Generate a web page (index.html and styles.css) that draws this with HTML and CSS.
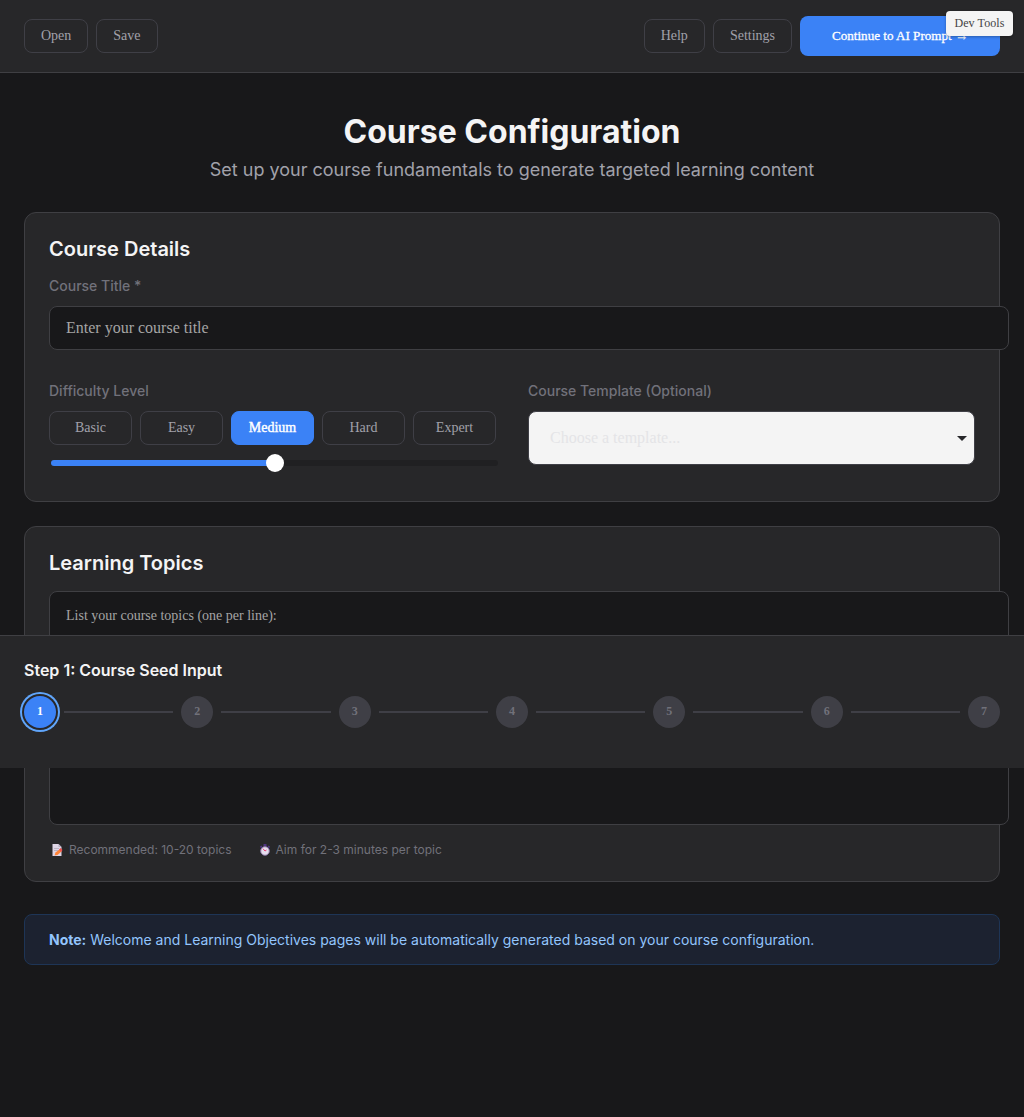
FILE: index.html
```html
<!DOCTYPE html>
<html lang="en">
<head>
<meta charset="utf-8">
<title>Course Configuration</title>
<link rel="stylesheet" href="styles.css">
</head>
<body>
<header class="topbar">
  <div class="group"><button class="btn">Open</button><button class="btn">Save</button></div>
  <div class="group"><button class="btn">Help</button><button class="btn">Settings</button><button class="btn primary">Continue to AI Prompt →</button></div>
</header>
<button class="dev-tools">Dev Tools</button>
<main class="content">
  <h1 class="title">Course Configuration</h1>
  <p class="subtitle">Set up your course fundamentals to generate targeted learning content</p>

  <section class="card details">
    <h2 class="card-title">Course Details</h2>
    <label class="label title-label">Course Title *</label>
    <input class="field" type="text" placeholder="Enter your course title">
    <div class="columns">
      <div class="column">
        <label class="label">Difficulty Level</label>
        <div class="levels">
          <button class="btn">Basic</button><button class="btn">Easy</button><button class="btn selected">Medium</button><button class="btn">Hard</button><button class="btn">Expert</button>
        </div>
        <div class="slider"><span class="fill"></span><span class="thumb"></span><span class="rest"></span></div>
      </div>
      <div class="column">
        <label class="label">Course Template (Optional)</label>
        <div class="select"><span class="choice">Choose a template...</span><svg width="10" height="5" viewBox="0 0 10 5"><path d="M0 0h10L5 5z" fill="#27272a"/></svg></div>
      </div>
    </div>
  </section>

  <section class="card topics">
    <h2 class="card-title">Learning Topics</h2>
    <textarea class="field area" placeholder="List your course topics (one per line):"></textarea>
    <div class="hints">
      <span class="hint"><svg class="memo" width="11" height="12" viewBox="0 0 11 12"><path d="M.5 0h6l3 3v9h-9z" fill="#ded5e6"/><path d="M6.500 0v3h3z" fill="#b7aec2"/><path d="M2 4.500h5M2 6.500h5" stroke="#b3a9ba" stroke-width=".8"/><path d="M2.500 11.500l1-3 4-3 2 2-4 3.500z" fill="#ff8438"/><path d="M7 5.500l1.500-1.500 2 2-1.500 2z" fill="#f0504d"/></svg>Recommended: 10-20 topics</span>
      <span class="hint"><svg class="watch" width="12" height="12" viewBox="0 0 12 12"><path d="M4.500 0h3v2.500h-3zM1 2.500l1.500-1 1 1.500L2 4.500zM9.500 1.500l1.500 1-1 2L8.500 3z" fill="#4e347f"/><circle cx="6" cy="7" r="4.300" fill="#e6deee" stroke="#8b78a7"/><path d="M6 7L4 4.700M6 7l1.500-1" stroke="#e83f74"/></svg>Aim for 2-3 minutes per topic</span>
    </div>
  </section>

  <aside class="note"><strong>Note:</strong> Welcome and Learning Objectives pages will be automatically generated based on your course configuration.</aside>
</main>

<footer class="progress">
  <h3 class="step-title">Step 1: Course Seed Input</h3>
  <div class="steps">
    <span class="step current">1</span><i class="line"></i><span class="step">2</span><i class="line"></i><span class="step">3</span><i class="line"></i><span class="step">4</span><i class="line"></i><span class="step">5</span><i class="line"></i><span class="step">6</span><i class="line"></i><span class="step">7</span>
  </div>
</footer>
</body>
</html>
```
FILE: styles.css
```css
* { box-sizing: border-box; }
body {
  margin: 0;
  min-height: 1117px;
  position: relative;
  overflow-x: hidden;
  background: #18181a;
  color: #f4f4f5;
  font-family: Inter, sans-serif;
}
h1, h2, h3, p { margin: 0; }
button, input, textarea, .select, .step { font-family: "Liberation Serif", serif; }

.topbar {
  height: 73px;
  padding: 0 24px;
  display: flex;
  align-items: center;
  justify-content: space-between;
  background: #272729;
  border-bottom: 1px solid #3f3f43;
}
.group { display: flex; align-items: center; gap: 8px; }
.btn {
  height: 34px;
  padding: 0 16px 1px;
  border: 1px solid #3f3f46;
  border-radius: 8px;
  background: transparent;
  color: #a1a1aa;
  font-size: 14px;
  white-space: nowrap;
}
.btn.primary {
  width: 200px;
  height: 40px;
  padding: 0 0 1px 32px;
  border: 0;
  background: #3b82f6;
  color: #fff;
  font-size: 13.1px;
  text-align: left;
  -webkit-text-stroke: 0.3px #fff;
}
.dev-tools {
  position: absolute;
  z-index: 20;
  top: 11px;
  left: 946px;
  width: 67px;
  height: 25px;
  padding: 0;
  border: 0;
  border-radius: 4px;
  background: #f4f4f4;
  color: #444;
  font-size: 12px;
  letter-spacing: 0.1px;
  box-shadow: 0 1px 3px rgba(0, 0, 0, 0.3);
}

.content { padding: 39px 24px 0; }
.title { line-height: 40px; font-size: 32px; font-weight: 700; text-align: center; }
.subtitle { margin-top: 4px; line-height: 28px; font-size: 18px; color: #a1a1aa; text-align: center; }
.card {
  padding: 24px;
  background: #272729;
  border: 1px solid #3f3f43;
  border-radius: 12px;
}
.details { height: 290px; margin-top: 28px; }
.topics { height: 356px; margin-top: 24px; }
.card-title { line-height: 24px; font-size: 20px; font-weight: 600; }
.label { display: block; line-height: 20px; font-size: 14px; font-weight: 500; color: #71717a; }
.title-label { margin-top: 15px; }
.field {
  display: block;
  width: 960px;
  height: 44px;
  margin-top: 10px;
  padding: 0 16px;
  background: #18181a;
  border: 1px solid #3f3f43;
  border-radius: 8px;
  font-size: 16px;
}
.field::placeholder { color: #a5a5a5; opacity: 1; }
.columns { display: grid; grid-template-columns: 1fr 1fr; gap: 32px; margin-top: 31px; }
.levels { display: grid; grid-template-columns: repeat(5, 1fr); gap: 8px; margin-top: 10px; }
.levels .btn { padding: 0 0 1px; }
.btn.selected { background: #3b82f6; border-color: #3b82f6; color: #fff; -webkit-text-stroke: 0.4px #fff; }
.slider { display: flex; align-items: center; height: 18px; margin: 9px -2px 0 2px; }
.fill, .rest { flex: 1; height: 6px; }
.fill { background: #3b82f6; border-radius: 3px 0 0 3px; margin-right: -9px; }
.rest { background: #202022; border-radius: 0 3px 3px 0; margin-left: -9px; }
.thumb { z-index: 1; width: 18px; height: 18px; border-radius: 50%; background: #fff; }
.select {
  display: flex;
  align-items: center;
  justify-content: space-between;
  height: 54px;
  margin-top: 10px;
  padding: 0 7px 0 21px;
  background: #f4f4f4;
  border: 1px solid #3f3f46;
  border-radius: 8px;
  font-size: 16px;
  color: #e4e4e7;
}
.area { height: 234px; margin-top: 16px; padding: 16px; font-size: 14px; resize: none; }
.hints { display: flex; gap: 27px; margin: 15px 0 0 3px; font-size: 12px; line-height: 20px; color: #71717a; }
.hint { display: flex; align-items: center; }
.memo { margin-right: 6px; }
.watch { margin-right: 5px; }
.note {
  height: 51px;
  margin-top: 32px;
  padding: 0 24px;
  line-height: 50px;
  font-size: 14px;
  color: #93c5fd;
  background: #1c2230;
  border: 1px solid #1e3556;
  border-radius: 8px;
}

/* Progress bar pinned over the page content */
.progress {
  position: absolute;
  z-index: 10;
  top: 635px;
  left: 0;
  width: 100%;
  height: 133px;
  padding: 24px 24px 0;
  background: #272729;
  border-top: 1px solid #3f3f43;
}
.step-title { line-height: 20px; font-size: 16px; font-weight: 600; }
.steps { display: flex; align-items: center; gap: 8px; margin-top: 16px; }
.step {
  width: 32px;
  height: 32px;
  border-radius: 50%;
  background: #3f3f46;
  color: #71717a;
  font-size: 12px;
  font-weight: 700;
  line-height: 31px;
  text-align: center;
}
.step.current { background: #3b82f6; color: #fff; box-shadow: 0 0 0 2px #272729, 0 0 0 4px #60a5fa; }
.line { flex: 1; height: 2px; background: #3f3f46; }
```
